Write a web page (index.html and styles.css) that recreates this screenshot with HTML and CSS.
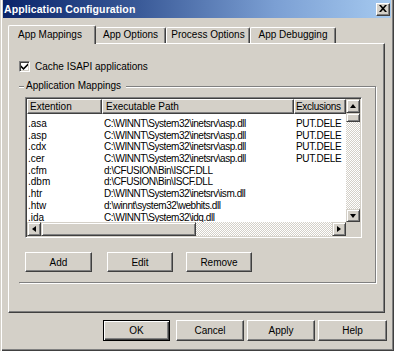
FILE: index.html
```html
<!DOCTYPE html>
<html>
<head>
<meta charset="utf-8">
<link rel="stylesheet" href="styles.css">
</head>
<body>
<div class="window">
  <div class="titlebar">
    <span class="title">Application Configuration</span>
    <span class="close"><svg width="8" height="7" viewBox="0 0 8 7"><path d="M0 0H2L4 2.3L6 0H8L5.1 3.5L8 7H6L4 4.7L2 7H0L2.9 3.5Z" fill="#000"/></svg></span>
  </div>
  <div class="tabs">
    <div class="tab active t1">App Mappings</div>
    <div class="tab t2">App Options</div>
    <div class="tab t3">Process Options</div>
    <div class="tab t4">App Debugging</div>
  </div>
  <div class="panel">
    <label class="check">
      <span class="box"><svg width="7" height="7" viewBox="0 0 7 7"><path d="M0 2.2L2.5 4.7L7 0.2V2.4L2.5 6.9L0 4.4Z" fill="#000"/></svg></span>
      <span>Cache ISAPI applications</span>
    </label>
    <fieldset class="group">
      <legend>Application Mappings</legend>
      <div class="list">
        <div class="list-view">
          <div class="header">
            <div class="hcell c1">Extention</div>
            <div class="hcell c2">Executable Path</div>
            <div class="hcell c3">Exclusions</div>
          </div>
          <div class="rows">
            <div class="row"><span class="c1">.asa</span><span class="c2">C:\WINNT\System32\inetsrv\asp.dll</span><span class="c3">PUT.DELE</span></div>
            <div class="row"><span class="c1">.asp</span><span class="c2">C:\WINNT\System32\inetsrv\asp.dll</span><span class="c3">PUT.DELE</span></div>
            <div class="row"><span class="c1">.cdx</span><span class="c2">C:\WINNT\System32\inetsrv\asp.dll</span><span class="c3">PUT.DELE</span></div>
            <div class="row"><span class="c1">.cer</span><span class="c2">C:\WINNT\System32\inetsrv\asp.dll</span><span class="c3">PUT.DELE</span></div>
            <div class="row"><span class="c1">.cfm</span><span class="c2">d:\CFUSION\Bin\ISCF.DLL</span><span class="c3"></span></div>
            <div class="row"><span class="c1">.dbm</span><span class="c2">d:\CFUSION\Bin\ISCF.DLL</span><span class="c3"></span></div>
            <div class="row"><span class="c1">.htr</span><span class="c2">D:\WINNT\System32\inetsrv\ism.dll</span><span class="c3"></span></div>
            <div class="row"><span class="c1">.htw</span><span class="c2">d:\winnt\system32\webhits.dll</span><span class="c3"></span></div>
            <div class="row"><span class="c1">.ida</span><span class="c2">C:\WINNT\System32\idq.dll</span><span class="c3"></span></div>
          </div>
        </div>
        <div class="vscroll">
          <div class="sbtn"><span class="arrow up"></span></div>
          <div class="thumb vthumb"></div>
          <div class="track"></div>
          <div class="sbtn"><span class="arrow down"></span></div>
        </div>
        <div class="hscroll">
          <div class="sbtn"><span class="arrow left"></span></div>
          <div class="thumb hthumb"></div>
          <div class="track"></div>
          <div class="sbtn"><span class="arrow right"></span></div>
        </div>
        <div class="corner"></div>
      </div>
      <div class="btnrow">
        <button class="btn b-add">Add</button>
        <button class="btn b-edit">Edit</button>
        <button class="btn b-remove">Remove</button>
      </div>
    </fieldset>
  </div>
  <div class="dialog-buttons">
    <button class="btn default b-ok">OK</button>
    <button class="btn b-cancel">Cancel</button>
    <button class="btn b-apply">Apply</button>
    <button class="btn b-help">Help</button>
  </div>
</div>
</body>
</html>
```
FILE: styles.css
```css
* { box-sizing: border-box; }
html, body { margin: 0; padding: 0; }
body {
  width: 394px;
  height: 351px;
  overflow: hidden;
  background: #d4d0c8;
  font-family: "Liberation Sans", Arial, sans-serif;
  font-size: 10px;
  color: #000;
}
.window {
  width: 394px;
  height: 351px;
  padding: 0 3px;
  background: #d4d0c8;
  display: flex;
  flex-direction: column;
  box-shadow: inset 1px 0 #d4d0c8, inset 2px 0 #fff, inset -1px -1px #404040, inset -2px -2px #808080;
}
.titlebar {
  height: 18px;
  flex: none;
  background: linear-gradient(to right, #0a246a 0%, #3a5a98 35%, #7b9fd3 70%, #a6caf0 100%);
  display: flex;
  align-items: center;
  padding-left: 1px;
}
.title {
  color: #fff;
  font-weight: bold;
  font-size: 10.5px;
  line-height: 18px;
  letter-spacing: 0.1px;
}
.close {
  margin-left: auto;
  margin-right: 1px;
  width: 14px;
  height: 13px;
  background: #d4d0c8;
  border: 1px solid;
  border-color: #fff #404040 #404040 #fff;
  box-shadow: inset -1px -1px #808080;
  display: flex;
  align-items: center;
  justify-content: center;
  padding-bottom: 1px;
}
.close svg { display: block; }
.tabs {
  margin-top: 7px;
  height: 18px;
  padding-left: 5px;
  display: flex;
  align-items: flex-end;
  position: relative;
  z-index: 1;
}
.tab {
  height: 16px;
  background: #d4d0c8;
  border-top: 1px solid #fff;
  border-left: 1px solid #fff;
  border-right: 1px solid #404040;
  box-shadow: inset -1px 0 #808080;
  border-radius: 2px 2px 0 0;
  line-height: 14px;
  text-align: center;
  white-space: nowrap;
}
.tab.active {
  height: 19px;
  margin-bottom: -1px;
  text-align: left;
  padding-left: 9px;
  line-height: 18px;
}
.t1 { width: 88px; }
.t2 { width: 70px; border-left: none; }
.t3 { width: 84px; }
.t4 { width: 86px; }
.panel {
  margin-left: 5px;
  width: 377px;
  height: 270px;
  flex: none;
  border: 1px solid;
  border-color: #fff #404040 #404040 #fff;
  box-shadow: inset -1px -1px #808080;
  padding: 16px 0 0 10px;
}
.check {
  display: flex;
  align-items: center;
  height: 12px;
}
.box {
  width: 11px;
  height: 11px;
  background: #fff;
  border: 1px solid;
  border-color: #808080 #fff #fff #808080;
  box-shadow: inset 1px 1px #404040, inset -1px -1px #d4d0c8;
  display: flex;
  align-items: center;
  justify-content: center;
  margin-right: 5px;
}
.box svg { display: block; }
.group {
  margin: 8px 0 0 0;
  width: 357px;
  padding: 0 0 10px 6px;
  border: none;
  border-top: 1px solid #808080;
  border-right: 1px solid #808080;
  border-bottom: 1px solid #808080;
  box-shadow: inset 0 1px #fff, 1px 1px #fff;
  min-width: 0;
}
.group legend {
  padding: 0 5px 0 2px;
  line-height: 12px;
  background: #d4d0c8;
  margin-left: -1px;
}
.list {
  margin-top: 5px;
  width: 337px;
  height: 141px;
  border: 1px solid;
  border-color: #808080 #fff #fff #808080;
  box-shadow: inset 1px 1px #404040, inset -1px -1px #d4d0c8;
  padding: 1px;
  display: grid;
  grid-template-columns: 319px 14px;
  grid-template-rows: 123px 14px;
  background: #fff;
}
.list-view {
  overflow: hidden;
  background: #fff;
}
.header {
  display: flex;
  height: 15px;
}
.hcell {
  flex: none;
  background: #d4d0c8;
  border: 1px solid;
  border-color: #fff #404040 #404040 #fff;
  box-shadow: inset -1px -1px #808080;
  line-height: 13px;
  padding-left: 2px;
  white-space: nowrap;
  overflow: hidden;
}
.hcell.c1 { width: 75px; }
.hcell.c2 { width: 192px; padding-left: 3px; }
.hcell.c3 { width: 52px; padding-left: 1px; letter-spacing: -0.3px; }
.rows { padding-top: 4px; }
.row {
  display: flex;
  height: 11.7px;
  line-height: 11.7px;
  white-space: nowrap;
}
.row span { flex: none; overflow: hidden; }
.row .c1 { width: 75px; padding-left: 1px; }
.row .c2 { width: 192px; padding-left: 2px; letter-spacing: -0.45px; }
.row .c3 { width: 52px; padding-left: 2px; letter-spacing: -0.3px; }
.vscroll {
  display: flex;
  flex-direction: column;
}
.hscroll {
  display: flex;
}
.track {
  flex: 1;
  background: repeating-conic-gradient(#d4d0c8 0 25%, #fff 0 50%) 0 0 / 2px 2px;
}
.sbtn, .thumb {
  flex: none;
  background: #d4d0c8;
  border: 1px solid;
  border-color: #d4d0c8 #404040 #404040 #d4d0c8;
  box-shadow: inset 1px 1px #fff, inset -1px -1px #808080;
  display: flex;
  align-items: center;
  justify-content: center;
}
.vscroll .sbtn { height: 14px; }
.vscroll .sbtn:last-child { height: 13px; }
.hscroll .sbtn { width: 14px; }
.vthumb { height: 9px; }
.hthumb { width: 155px; }
.corner { background: #d4d0c8; }
.arrow { width: 0; height: 0; border-style: solid; }
.arrow.up { border-width: 0 3.5px 4px 3.5px; border-color: transparent transparent #000 transparent; }
.arrow.down { border-width: 4px 3.5px 0 3.5px; border-color: #000 transparent transparent transparent; }
.arrow.left { border-width: 3.5px 4px 3.5px 0; border-color: transparent #000 transparent transparent; }
.arrow.right { border-width: 3.5px 0 3.5px 4px; border-color: transparent transparent transparent #000; }
.btnrow {
  display: flex;
  margin-top: 14px;
  height: 20px;
}
.btn {
  font-family: inherit;
  font-size: 10px;
  color: #000;
  background: #d4d0c8;
  border: 1px solid;
  border-color: #fff #404040 #404040 #fff;
  box-shadow: inset -1px -1px #808080;
  padding: 0;
  margin: 0;
  height: 20px;
  flex: none;
}
.b-add { width: 67px; }
.b-edit { width: 66px; margin-left: 15px; }
.b-remove { width: 66px; margin-left: 13px; }
.dialog-buttons {
  display: flex;
  margin-top: 7px;
  padding-left: 100px;
}
.dialog-buttons .btn { height: 21px; }
.btn.default {
  border: 1px solid #000;
  box-shadow: inset 1px 1px #fff, inset -1px -1px #404040, inset -2px -2px #808080;
}
.b-ok { width: 67px; }
.b-cancel { width: 68px; margin-left: 6px; }
.b-apply { width: 68px; margin-left: 3px; }
.b-help { width: 69px; margin-left: 3px; }
```
